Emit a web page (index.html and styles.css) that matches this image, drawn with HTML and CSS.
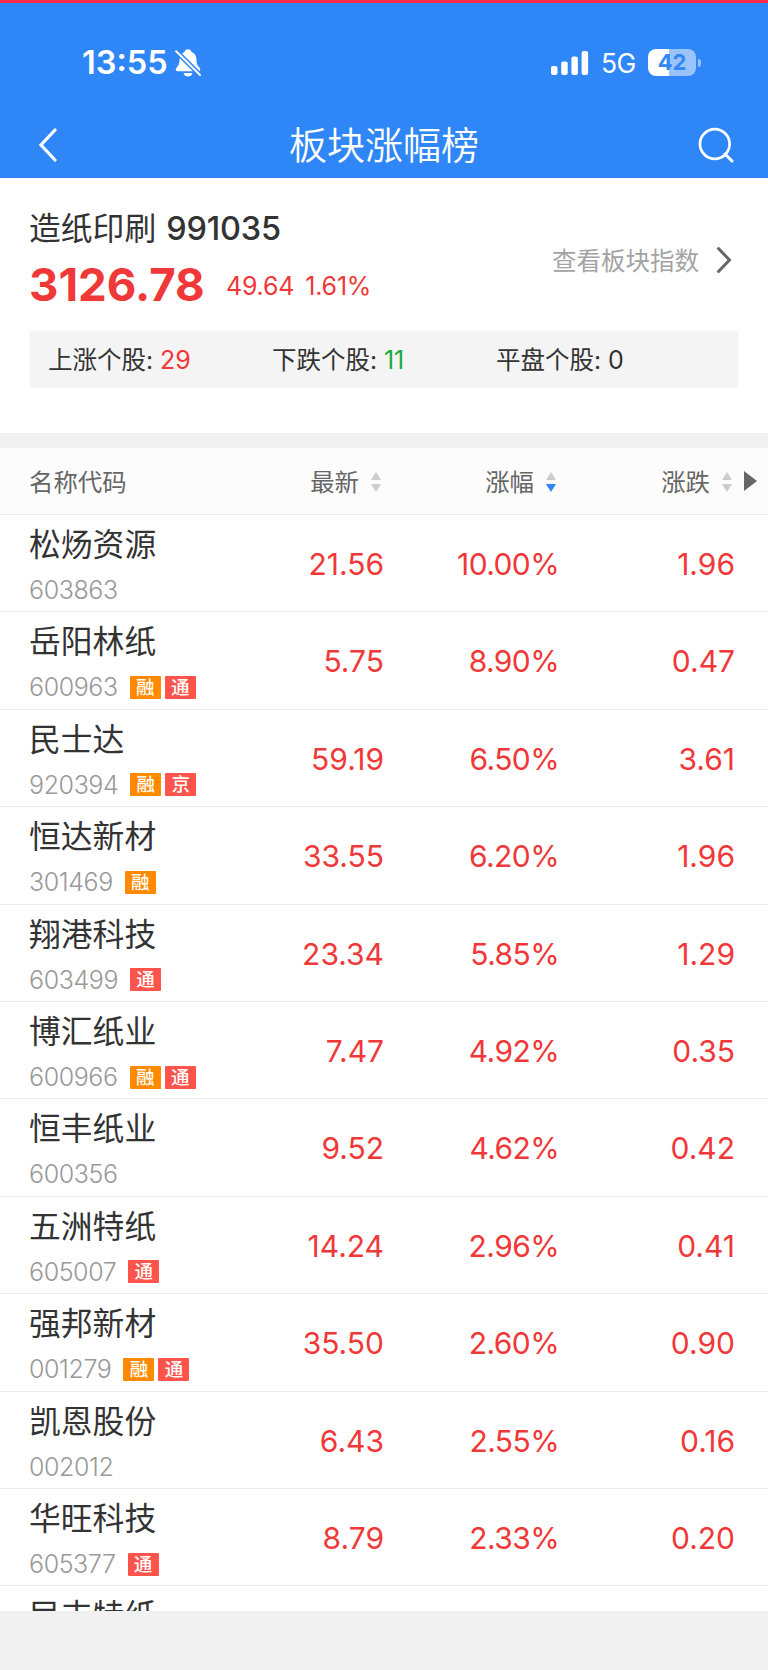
FILE: index.html
```html
<!DOCTYPE html>
<html lang="zh-CN">
<head>
  <meta charset="UTF-8" />
  <meta name="viewport" content="width=device-width, initial-scale=1.0" />
  <title>板块涨幅榜</title>
  <link rel="stylesheet" href="styles.css">
</head>
<body>
  <header>
    <div class="status-bar">
      <div class="status-left">
        <span class="clock">13:55</span>
        <svg class="bell" width="26" height="28" viewBox="0 0 26 28">
          <path d="M5 6.5 C6.5 4.5 8.5 3.5 9.5 3 C9.8 1.2 11 .2 13 .2 C15 .2 16.2 1.2 16.5 3 C20 4.5 21.5 7 21.5 11 C21.5 15 22.5 16.5 24 18 Q25.5 19.5 25.3 21 Q25 22.3 23.5 22.3 L2.5 22.3 Q.5 22.3 .7 20.5 C.8 18.5 4.5 17.5 4.5 11 Z" fill="#fff"/>
          <path d="M8.5 24 H17.5 Q16.5 27.6 13 27.6 Q9.5 27.6 8.5 24 Z" fill="#fff"/>
          <path d="M1 2 L25 26" stroke="#2f86f6" stroke-width="5"/>
          <path d="M1.2 2.2 L25 26" stroke="#fff" stroke-width="2" stroke-linecap="round"/>
        </svg>
      </div>
      <div class="status-right">
        <svg class="signal" width="38" height="24" viewBox="0 0 38 24">
          <rect x="0" y="15" width="6.5" height="9" rx="2" fill="#fff"/>
          <rect x="10.2" y="10.5" width="6.5" height="13.5" rx="2" fill="#fff"/>
          <rect x="20.4" y="5.5" width="6.5" height="18.5" rx="2" fill="#fff"/>
          <rect x="30.6" y="0" width="6.5" height="24" rx="2" fill="#fff"/>
        </svg>
        <span class="network">5G</span>
        <div class="battery">42</div>
        <span class="battery-tip"></span>
      </div>
    </div>
    <div class="title-bar">
      <svg width="20" height="34" viewBox="0 0 20 34">
        <path d="M17 2 L3 17 L17 32" fill="none" stroke="#fff" stroke-width="3.2" stroke-linecap="round"/>
      </svg>
      <h1>板块涨幅榜</h1>
      <svg width="36" height="36" viewBox="0 0 36 36">
        <circle cx="16.8" cy="17" r="14.8" fill="none" stroke="#fff" stroke-width="2.7"/>
        <path d="M27 27 L34 34" stroke="#fff" stroke-width="3" stroke-linecap="round"/>
      </svg>
    </div>
  </header>

  <section class="summary">
    <div class="summary-top">
      <div>
        <div class="board-name">造纸印刷 <span>991035</span></div>
        <div class="board-quote">
          <span class="index">3126.78</span>
          <span class="change">49.64</span>
          <span class="change">1.61%</span>
        </div>
      </div>
      <a class="board-link">查看板块指数
        <svg width="16" height="28" viewBox="0 0 16 28">
          <path d="M2.5 2.5 L13.5 14 L2.5 25.5" fill="none" stroke="#666" stroke-width="3" stroke-linecap="round"/>
        </svg>
      </a>
    </div>
    <div class="counts">
      <div>上涨个股: <span class="up">29</span></div>
      <div>下跌个股: <span class="down">11</span></div>
      <div>平盘个股: <span>0</span></div>
    </div>
  </section>

  <section class="stocks">
    <div class="list-head">
      <div>名称代码</div>
      <div class="col">最新<span class="sort"></span></div>
      <div class="col">涨幅<span class="sort desc"></span></div>
      <div class="col">涨跌<span class="sort"></span></div>
      <span class="more"></span>
    </div>
    <div class="row">
      <div><div class="name">松炀资源</div><div class="code">603863</div></div>
      <div class="val">21.56</div><div class="val pct">10.00%</div><div class="val">1.96</div>
    </div>
    <div class="row">
      <div><div class="name">岳阳林纸</div><div class="code">600963<i class="tag rong">融</i><i class="tag">通</i></div></div>
      <div class="val">5.75</div><div class="val pct">8.90%</div><div class="val">0.47</div>
    </div>
    <div class="row">
      <div><div class="name">民士达</div><div class="code">920394<i class="tag rong">融</i><i class="tag">京</i></div></div>
      <div class="val">59.19</div><div class="val pct">6.50%</div><div class="val">3.61</div>
    </div>
    <div class="row">
      <div><div class="name">恒达新材</div><div class="code">301469<i class="tag rong">融</i></div></div>
      <div class="val">33.55</div><div class="val pct">6.20%</div><div class="val">1.96</div>
    </div>
    <div class="row">
      <div><div class="name">翔港科技</div><div class="code">603499<i class="tag">通</i></div></div>
      <div class="val">23.34</div><div class="val pct">5.85%</div><div class="val">1.29</div>
    </div>
    <div class="row">
      <div><div class="name">博汇纸业</div><div class="code">600966<i class="tag rong">融</i><i class="tag">通</i></div></div>
      <div class="val">7.47</div><div class="val pct">4.92%</div><div class="val">0.35</div>
    </div>
    <div class="row">
      <div><div class="name">恒丰纸业</div><div class="code">600356</div></div>
      <div class="val">9.52</div><div class="val pct">4.62%</div><div class="val">0.42</div>
    </div>
    <div class="row">
      <div><div class="name">五洲特纸</div><div class="code">605007<i class="tag">通</i></div></div>
      <div class="val">14.24</div><div class="val pct">2.96%</div><div class="val">0.41</div>
    </div>
    <div class="row">
      <div><div class="name">强邦新材</div><div class="code">001279<i class="tag rong">融</i><i class="tag">通</i></div></div>
      <div class="val">35.50</div><div class="val pct">2.60%</div><div class="val">0.90</div>
    </div>
    <div class="row">
      <div><div class="name">凯恩股份</div><div class="code">002012</div></div>
      <div class="val">6.43</div><div class="val pct">2.55%</div><div class="val">0.16</div>
    </div>
    <div class="row">
      <div><div class="name">华旺科技</div><div class="code">605377<i class="tag">通</i></div></div>
      <div class="val">8.79</div><div class="val pct">2.33%</div><div class="val">0.20</div>
    </div>
    <div class="row">
      <div><div class="name">民丰特纸</div></div>
    </div>
  </section>
</body>
</html>
```
FILE: styles.css
```css
* {
  box-sizing: border-box;
}

body {
  margin: 0;
  height: 1670px;
  overflow: hidden;
  background-color: #f1f1f1;
  color: #333;
  font-family: Inter, "Noto Sans CJK SC", sans-serif;
}

header {
  height: 178px;
  background-color: #2f86f6;
  border-top: 3px solid #ff2d4b;
  color: white;
}

.status-bar {
  display: flex;
  justify-content: space-between;
  height: 112px;
  padding: 7px 67px 0 82px;
}

.status-left,
.status-right {
  display: flex;
  align-items: center;
}

.clock {
  width: 93px;
  font-size: 32.5px;
  font-weight: 600;
}

.signal {
  margin-right: 12px;
}

.network {
  width: 47px;
  font-size: 26.5px;
  font-weight: 400;
  letter-spacing: -0.5px;
}

.battery {
  width: 48px;
  height: 27px;
  border-radius: 8px;
  background: linear-gradient(to right, white 21px, #9ac3fb 21px);
  color: #2f86f6;
  font-size: 22px;
  font-weight: 700;
  line-height: 27px;
  text-align: center;
}

.battery-tip {
  width: 3px;
  height: 8px;
  margin-left: 2px;
  border-radius: 0 4px 4px 0;
  background-color: #9ac3fb;
}

.title-bar {
  display: flex;
  justify-content: space-between;
  align-items: center;
  height: 60px;
  padding: 0 34px 0 38px;
}

.title-bar h1 {
  margin: 0 0 0 12px;
  font-size: 38px;
  font-weight: 350;
  line-height: 60px;
}

.summary {
  height: 270px;
  padding: 29px 29px 0;
  background-color: white;
  border-bottom: 15px solid #f1f1f1;
}

.summary-top {
  display: flex;
  justify-content: space-between;
  height: 124px;
}

.board-name {
  height: 44px;
  font-size: 31.8px;
  line-height: 44px;
  white-space: nowrap;
}

.board-name span {
  margin-left: 1px;
  font-size: 32.5px;
  font-weight: 500;
  letter-spacing: -0.2px;
}

.board-quote {
  display: flex;
  align-items: center;
  color: #f03838;
  line-height: 68px;
}

.index {
  width: 197px;
  font-size: 45.6px;
  font-weight: 700;
}

.change {
  margin: 3px 11px 0 0;
  font-size: 25px;
  line-height: 65px;
  letter-spacing: -0.2px;
}

.board-link {
  display: flex;
  align-items: center;
  gap: 17px;
  height: 105px;
  padding-right: 7px;
  color: #a3a3a3;
  font-size: 24.5px;
}

.counts {
  display: grid;
  grid-template-columns: 224px 224px 1fr;
  height: 57px;
  padding: 1px 0 0 19px;
  border-radius: 4px;
  background-color: #f4f4f4;
  font-size: 24.5px;
  line-height: 57px;
}

.counts span {
  font-size: 25px;
}

.up {
  color: #f03838;
}

.down {
  color: #1aab40;
}

.stocks {
  height: 1163px;
  overflow: hidden;
  background-color: white;
}

.list-head,
.row {
  display: grid;
  grid-template-columns: 180px 175px 175px 176px;
  padding-left: 29px;
  border-bottom: 1px solid #ececec;
}

.list-head {
  position: relative;
  height: 67px;
  background-color: #fcfcfc;
  color: #666;
  font-size: 24.4px;
  line-height: 68px;
}

.col {
  display: flex;
  justify-content: flex-end;
  align-items: center;
  gap: 12px;
  padding-right: 3px;
}

.sort {
  display: grid;
  gap: 4px;
}

.sort::before,
.sort::after {
  content: "";
  border: 5.5px solid transparent;
}

.sort::before {
  border-top: 0;
  border-bottom: 8px solid #ccc;
}

.sort::after {
  border-bottom: 0;
  border-top: 8px solid #ccc;
}

.sort.desc::after {
  border-top-color: #2f86f6;
}

.more {
  position: absolute;
  left: 744px;
  top: 23px;
  border: 10px solid transparent;
  border-left: 13px solid #666;
  border-right: 0;
}

.row {
  height: 97.42px;
}

.name {
  height: 53px;
  padding-top: 7px;
  font-size: 31.8px;
  line-height: 46px;
  white-space: nowrap;
}

.code {
  display: flex;
  align-items: center;
  height: 44px;
  color: #999;
  font-size: 25px;
  font-weight: 300;
  letter-spacing: -0.4px;
}

.tag {
  width: 31px;
  height: 23px;
  margin-left: 4px;
  border-radius: 1px;
  background-color: #ff544b;
  color: white;
  font-size: 18.5px;
  font-style: normal;
  font-weight: 500;
  letter-spacing: 0;
  line-height: 22px;
  text-align: center;
}

.tag:first-child {
  margin-left: 12px;
}

.tag.rong {
  background-color: #ff8a00;
}

.val {
  color: #f03838;
  font-size: 30px;
  line-height: 98px;
  text-align: right;
}

.pct {
  letter-spacing: -0.6px;
}
```
